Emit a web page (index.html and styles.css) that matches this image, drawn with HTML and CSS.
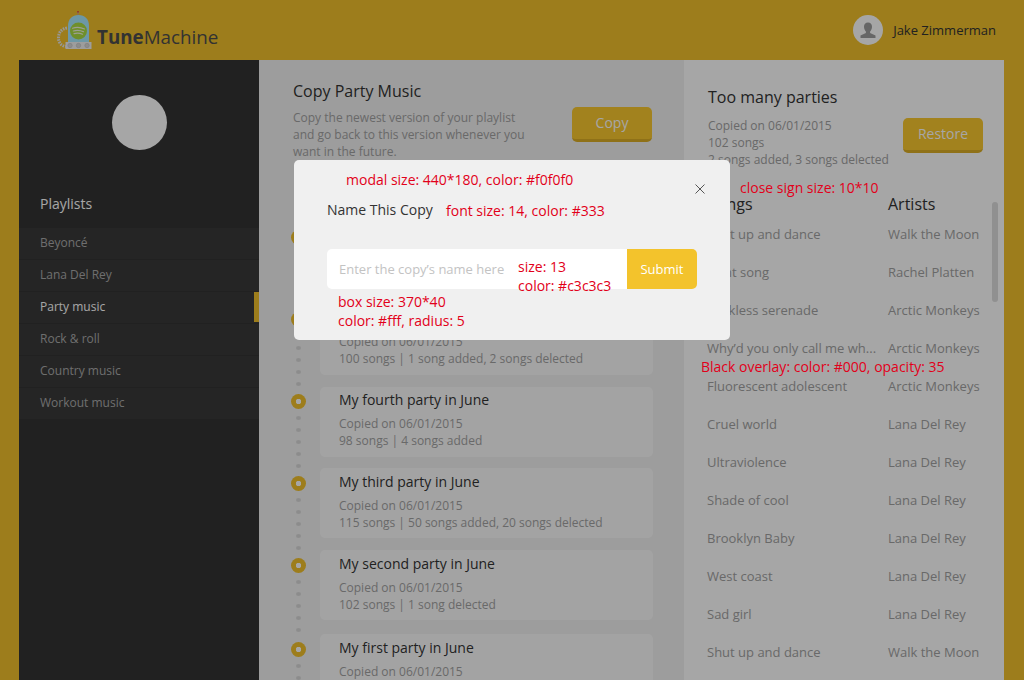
FILE: index.html
```html
<!DOCTYPE html>
<html lang="en">
<head>
    <meta charset="UTF-8">
    <title>TuneMachine</title>
    <link rel="stylesheet" href="styles.css">
</head>
<body>

    <header class="topbar">
        <div class="brand">
            <svg class="brand-logo" width="36" height="40" viewBox="0 0 36 40">
                <circle cx="21" cy="2" r="1" fill="#e0413a"/>
                <rect x="20.5" y="2" width="1" height="4" fill="#c9a0a0"/>
                <path d="M10 18 C4 19 1.5 23 1.5 28 C1.5 32 4 36 9 36.5" fill="none" stroke="#e8e8e8" stroke-width="3" stroke-dasharray="1.6 1"/>
                <path d="M11 33 V16 C11 9 15 5 21.5 5 C28 5 32 9 32 16 V33 Z" fill="#a8eaff"/>
                <circle cx="21.5" cy="21" r="8.5" fill="#abdc42"/>
                <path d="M15.5 18.2 C19 17 24 17.3 27.5 19 M16.3 21 C19.5 20 23.5 20.3 26.6 21.8 M17 23.6 C19.8 22.8 23 23 25.6 24.3" fill="none" stroke="#f0f5e0" stroke-width="1.1" stroke-linecap="round"/>
                <rect x="8.5" y="32" width="26" height="7" fill="#f2f2f2"/>
                <circle cx="13" cy="35.5" r="2.2" fill="#d8d8d8" stroke="#c0c0c0" stroke-width=".6"/>
                <circle cx="21.5" cy="35.5" r="2.2" fill="#d8d8d8" stroke="#c0c0c0" stroke-width=".6"/>
                <circle cx="30" cy="35.5" r="2.2" fill="#d8d8d8" stroke="#c0c0c0" stroke-width=".6"/>
            </svg>
            <span class="brand-name"><b>Tune</b>Machine</span>
        </div>
        <div class="user">
            <svg class="user-pic" width="30" height="30" viewBox="0 0 30 30">
                <circle cx="15" cy="15" r="15" fill="#fff"/>
                <path d="M15 7.5 C12.4 7.5 11 9.4 11 11.8 C11 13.8 12 15.6 12.9 16.6 L12.9 18 L7.5 20.6 L7.5 23 L22.5 23 L22.5 20.6 L17.1 18 L17.1 16.6 C18 15.6 19 13.8 19 11.8 C19 9.4 17.6 7.5 15 7.5 Z" fill="#9d9d9d"/>
            </svg>
            <span>Jake Zimmerman</span>
        </div>
    </header>

    <div class="main">
        <aside class="sidebar">
            <div class="sidebar-pic"></div>
            <h3>Playlists</h3>
            <ul class="playlists">
                <li>Beyoncé</li>
                <li>Lana Del Rey</li>
                <li class="active">Party music</li>
                <li>Rock &amp; roll</li>
                <li>Country music</li>
                <li>Workout music</li>
            </ul>
        </aside>

        <section class="copies">
            <div class="copies-head">
                <div>
                    <h2>Copy Party Music</h2>
                    <p>Copy the newest version of your playlist and go back to this version whenever you want in the future.</p>
                </div>
                <button class="btn">Copy</button>
            </div>
            <div class="timeline">
                <div class="copy-item">
                    <div class="rail"><i class="big"></i><i></i><i></i><i></i><i></i><i></i></div>
                    <div class="card"><h4>My sixth party in June</h4><p>Copied on 06/01/2015<br>100 songs | 3 songs added</p></div>
                </div>
                <div class="copy-item">
                    <div class="rail"><i class="big"></i><i></i><i></i><i></i><i></i><i></i></div>
                    <div class="card"><h4>My fifth party in June</h4><p>Copied on 06/01/2015<br>100 songs | 1 song added, 2 songs delected</p></div>
                </div>
                <div class="copy-item">
                    <div class="rail"><i class="big"></i><i></i><i></i><i></i><i></i><i></i></div>
                    <div class="card"><h4>My fourth party in June</h4><p>Copied on 06/01/2015<br>98 songs | 4 songs added</p></div>
                </div>
                <div class="copy-item">
                    <div class="rail"><i class="big"></i><i></i><i></i><i></i><i></i><i></i></div>
                    <div class="card"><h4>My third party in June</h4><p>Copied on 06/01/2015<br>115 songs | 50 songs added, 20 songs delected</p></div>
                </div>
                <div class="copy-item">
                    <div class="rail"><i class="big"></i><i></i><i></i><i></i><i></i><i></i></div>
                    <div class="card"><h4>My second party in June</h4><p>Copied on 06/01/2015<br>102 songs | 1 song delected</p></div>
                </div>
                <div class="copy-item">
                    <div class="rail"><i class="big"></i><i></i><i></i><i></i><i></i><i></i></div>
                    <div class="card"><h4>My first party in June</h4><p>Copied on 06/01/2015<br>102 songs</p></div>
                </div>
            </div>
        </section>

        <section class="detail">
            <h2>Too many parties</h2>
            <div class="detail-info">
                <p>Copied on 06/01/2015<br>102 songs<br>2 songs added, 3 songs delected</p>
                <button class="btn">Restore</button>
            </div>
            <div class="track-head"><span>Songs</span><span>Artists</span></div>
            <div class="track"><span>Shut up and dance</span><span>Walk the Moon</span></div>
            <div class="track"><span>Fight song</span><span>Rachel Platten</span></div>
            <div class="track"><span>Reckless serenade</span><span>Arctic Monkeys</span></div>
            <div class="track"><span>Why’d you only call me wh...</span><span>Arctic Monkeys</span></div>
            <div class="track"><span>Fluorescent adolescent</span><span>Arctic Monkeys</span></div>
            <div class="track"><span>Cruel world</span><span>Lana Del Rey</span></div>
            <div class="track"><span>Ultraviolence</span><span>Lana Del Rey</span></div>
            <div class="track"><span>Shade of cool</span><span>Lana Del Rey</span></div>
            <div class="track"><span>Brooklyn Baby</span><span>Lana Del Rey</span></div>
            <div class="track"><span>West coast</span><span>Lana Del Rey</span></div>
            <div class="track"><span>Sad girl</span><span>Lana Del Rey</span></div>
            <div class="track"><span>Shut up and dance</span><span>Walk the Moon</span></div>
            <div class="scrollbar"></div>
        </section>
    </div>

    <!-- modal on top of the page -->
    <div class="overlay"></div>
    <div class="modal">
        <svg class="modal-close" width="10" height="10" viewBox="0 0 10 10">
            <path d="M0.5 0.5 L9.5 9.5 M9.5 0.5 L0.5 9.5" stroke="#444" stroke-width="0.9" fill="none"/>
        </svg>
        <h4>Name This Copy</h4>
        <form class="modal-form">
            <input type="text" placeholder="Enter the copy’s name here">
            <button type="button">Submit</button>
        </form>
    </div>

    <!-- designer's notes -->
    <span class="note note-modal">modal size: 440*180, color: #f0f0f0</span>
    <span class="note note-close">close sign size: 10*10</span>
    <span class="note note-font">font size: 14, color: #333</span>
    <span class="note note-size">size: 13<br>color: #c3c3c3</span>
    <span class="note note-box">box size: 370*40<br>color: #fff, radius: 5</span>
    <span class="note note-overlay">Black overlay: color: #000, opacity: 35</span>

</body>
</html>
```

FILE: styles.css
```css
* {
    box-sizing: border-box;
}
html, body {
    height: 680px;
    overflow: hidden;
}
body {
    margin: 0;
    position: relative;
    background-color: #f1c02b;
    font-family: "Open Sans", sans-serif;
    color: #333;
}
h2, h3, h4, p, ul {
    margin: 0;
    padding: 0;
    font-weight: normal;
}

/* top bar */
.topbar {
    height: 60px;
    padding: 0 28px 0 57px;
    display: flex;
    align-items: center;
    justify-content: space-between;
}
.brand {
    display: flex;
    align-items: center;
}
.brand-logo {
    display: block;
}
.brand-name {
    margin-left: 4px;
    margin-top: 14px;
    font-size: 18.8px;
    line-height: 24px;
    color: #4e4e4e;
}
.user {
    display: flex;
    align-items: center;
    gap: 10px;
    font-size: 13px;
}
.user-pic {
    display: block;
}

.main {
    height: 620px;
    margin: 0 20px 0 19px;
    display: flex;
    overflow: hidden;
}

/* left column */
.sidebar {
    width: 240px;
    flex: none;
    padding-top: 35px;
    background-color: #343434;
}
.sidebar-pic {
    width: 55px;
    height: 55px;
    margin: 0 auto;
    border-radius: 50%;
    background-color: #fff;
}
.sidebar h3 {
    margin: 44px 0 14px 21px;
    font-size: 14px;
    line-height: 20px;
    color: #fff;
}
.playlists {
    list-style: none;
}
.playlists li {
    position: relative;
    height: 31px;
    margin-bottom: 1px;
    padding-left: 21px;
    font-size: 12px;
    line-height: 29px;
    color: #aaa;
    background-color: #3a3a3a;
}
.playlists li.active {
    color: #fff;
}
.playlists li.active::after {
    content: "";
    position: absolute;
    right: 0;
    top: 0;
    width: 5px;
    height: 30px;
    background-color: #f1c02b;
}

/* middle column */
.copies {
    width: 425px;
    flex: none;
    padding: 20px 31px 0 34px;
    background-color: #f1f1f1;
}
.copies h2,
.detail h2 {
    font-size: 16px;
    line-height: 22px;
    color: #333;
}
.copies-head {
    display: flex;
    justify-content: space-between;
    height: 143px;
    padding-right: 1px;
}
.copies-head p {
    width: 245px;
    margin-top: 7px;
    font-size: 12px;
    line-height: 17px;
    color: #a2a2a2;
}
.btn {
    width: 80px;
    height: 35px;
    margin-top: 27px;
    padding: 0 0 2px;
    flex: none;
    border: 0;
    border-bottom: 3px solid #dcae25;
    border-radius: 5px;
    background-color: #f9c82e;
    font-family: inherit;
    font-size: 14px;
    color: #fff;
}
.timeline {
    margin-left: -2px;
}
.copy-item {
    display: flex;
    align-items: flex-start;
    margin-bottom: 12px;
}
/* the rows are not quite evenly spaced in the mockup */
.copy-item:nth-child(3) {
    margin-bottom: 11px;
}
.copy-item:nth-child(5) {
    margin-bottom: 14px;
}
.rail {
    width: 15px;
    height: 70px;
    flex: none;
    margin-right: 14px;
    padding-top: 8px;
    display: flex;
    flex-direction: column;
    align-items: center;
    gap: 8px;
}
.copy-item:nth-child(-n+3) .rail {
    padding-top: 7px;
}
.rail i {
    width: 5px;
    height: 4px;
    flex: none;
    border-radius: 50%;
    background-color: #d8d8d8;
}
.rail i.big {
    width: 15px;
    height: 15px;
    margin-bottom: -1px;
    background: radial-gradient(circle, #fff 0 2.5px, #f1c02b 3px);
}
.card {
    flex: 1;
    height: 70px;
    padding: 4px 19px 0;
    border-radius: 5px;
    background-color: #fbfbfb;
}
.copy-item:nth-child(-n+3) .card {
    padding-top: 3px;
}
.card h4 {
    font-size: 14px;
    line-height: 20px;
    color: #333;
}
.card p {
    margin-top: 5px;
    font-size: 12px;
    line-height: 17px;
    color: #a2a2a2;
}

/* right column */
.detail {
    position: relative;
    flex: 1;
    padding: 26px 0 0 24px;
    background-color: #fff;
}
.detail-info {
    display: flex;
    justify-content: space-between;
    padding-right: 21px;
    height: 84px;
}
.detail-info p {
    margin-top: 9px;
    font-size: 12px;
    line-height: 17px;
    color: #a2a2a2;
}
.detail-info .btn {
    margin-top: 10px;
}
.track-head,
.track {
    display: grid;
    grid-template-columns: 180px 1fr;
}
.track-head {
    height: 23px;
    font-size: 16px;
    line-height: 24px;
    color: #333;
}
.track {
    height: 38px;
    margin-left: -1px;
    font-size: 13px;
    line-height: 38px;
    color: #a2a2a2;
}
.track span + span {
    margin-left: 1px;
}
.scrollbar {
    position: absolute;
    top: 142px;
    right: 6px;
    width: 6px;
    height: 100px;
    border-radius: 3px;
    background-color: #ddd;
}

/* modal */
.overlay {
    position: absolute;
    top: 0;
    left: 0;
    width: 100%;
    height: 100%;
    background-color: rgba(0, 0, 0, 0.35);
}
.modal {
    position: absolute;
    top: 160px;
    left: 294px;
    width: 436px;
    height: 180px;
    padding: 40px 33px 0;
    border-radius: 5px;
    background-color: #f0f0f0;
}
.modal h4 {
    font-size: 14px;
    line-height: 20px;
    color: #333;
}
.modal-close {
    position: absolute;
    top: 24px;
    right: 25px;
}
.modal-form {
    display: flex;
    margin-top: 29px;
}
.modal-form input {
    width: 300px;
    height: 40px;
    padding: 0 12px;
    border: 0;
    outline: 0;
    border-radius: 5px 0 0 5px;
    background-color: #fff;
    font-family: inherit;
    font-size: 13px;
}
.modal-form input::placeholder {
    color: #c3c3c3;
    opacity: 1;
}
.modal-form button {
    width: 70px;
    height: 40px;
    border: 0;
    border-radius: 0 5px 5px 0;
    background-color: #f3c32c;
    font-family: inherit;
    font-size: 13px;
    font-weight: 500;
    color: #fff;
}

/* red notes */
.note {
    position: absolute;
    font-size: 14px;
    line-height: 19px;
    white-space: nowrap;
    color: #e2001a;
}
.note-modal { top: 170px; left: 346px; }
.note-close { top: 178px; left: 740px; }
.note-font { top: 201px; left: 446px; }
.note-size { top: 257px; left: 518px; }
.note-box { top: 292px; left: 338px; }
.note-overlay { top: 357px; left: 701px; }
```
